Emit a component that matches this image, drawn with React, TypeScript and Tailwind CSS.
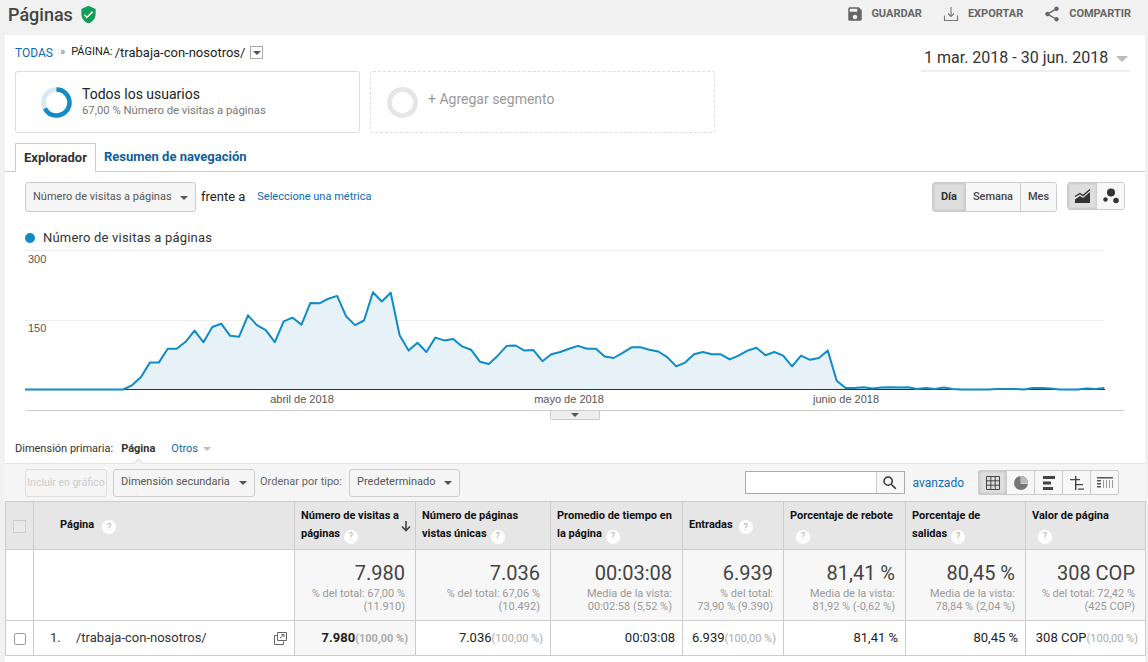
import type { ReactNode } from "react";
import { MdSave, MdShare, MdVerifiedUser, MdSearch } from "react-icons/md";

// daily pageviews, 1 mar - 30 jun
const visits = [
  0, 0, 0, 0, 0, 0, 0, 0, 0, 0, 0, 0, 9, 27, 58, 58, 88, 88, 103, 127, 102, 135, 142, 116, 114, 160, 139, 128, 102, 147,
  155, 140, 187, 186, 196, 202, 158, 139, 149, 210, 190, 209, 117, 84, 101, 81, 112, 106, 109, 93, 86, 60, 55, 73, 94,
  95, 84, 85, 61, 76, 81, 88, 94, 88, 88, 71, 68, 79, 91, 91, 86, 82, 70, 50, 58, 76, 81, 76, 76, 65, 73, 84, 90, 74,
  81, 73, 50, 73, 64, 68, 84, 19, 3, 3, 5, 2, 4, 5, 4, 5, 1, 3, 1, 4, 1, 0, 0, 0, 0, 1, 1, 1, 0, 3, 3, 2, 0, 0, 0, 2, 1, 3,
];

const BASE_Y = 139.5;
const linePoints = visits.map((v, i) => `${(i * 8.92).toFixed(1)},${(BASE_Y - (v * 139) / 300).toFixed(1)}`).join(" ");
const areaPoints = `0,${BASE_Y} ${linePoints} 1079,${BASE_Y}`;

function Caret({ className = "border-t-[#555]" }: { className?: string }) {
  return <span className={`inline-block w-0 h-0 border-x-[4px] border-x-transparent border-t-[4px] ${className}`} />;
}

function Help({ className = "" }: { className?: string }) {
  return (
    <span
      className={`inline-flex items-center justify-center w-[14px] h-[14px] rounded-full bg-white text-[9px] font-normal leading-none text-[#aaa] align-[-2px] ${className}`}
    >
      ?
    </span>
  );
}

function Donut({ color, pct, rest }: { color: string; pct: number; rest: string }) {
  const c = 2 * Math.PI * 13;
  return (
    <svg width="31" height="31" viewBox="0 0 31 31" className="shrink-0">
      <circle cx="15.5" cy="15.5" r="13" fill="none" stroke={rest} strokeWidth="4.5" />
      <circle
        cx="15.5"
        cy="15.5"
        r="13"
        fill="none"
        stroke={color}
        strokeWidth="4.5"
        strokeDasharray={`${(c * pct) / 100} ${c}`}
        transform="rotate(-90 15.5 15.5)"
      />
    </svg>
  );
}

function Select({ label, className }: { label: string; className: string }) {
  return (
    <div
      className={`flex items-center justify-between rounded-[3px] border border-[#ccc] bg-[#f5f5f5] text-[#555] ${className}`}
    >
      <span>{label}</span>
      <Caret />
    </div>
  );
}

function HeaderCell({ first, second, sorted }: { first: string; second?: string; sorted?: boolean }) {
  return (
    <th
      className={`relative border border-[#ccc] px-[6px] text-left align-middle text-[11px] font-bold leading-[18px] text-[#111] ${sorted ? "pr-[14px]" : ""}`}
    >
      <div>{first}</div>
      <div>
        {second && <span className="mr-[4px]">{second}</span>}
        <Help className={second ? "" : "ml-[6px]"} />
      </div>
      {sorted && (
        <svg width="12" height="12" viewBox="0 0 12 12" className="absolute right-[3px] top-[18px]">
          <path d="M6 1v9M2 6.5 6 10.5 10 6.5" fill="none" stroke="#444" strokeWidth="1.6" />
        </svg>
      )}
    </th>
  );
}

function TotalCell({ big, lines }: { big: string; lines: string[] }) {
  return (
    <td className="border border-[#ccc] bg-[#f7f7f7] pr-[10px] pt-[1px] text-right align-middle">
      <div className="text-[20px] leading-[28px] text-[#444]">{big}</div>
      {lines.map((l) => (
        <div key={l} className="text-[11px] leading-[13px] text-[#999]">
          {l}
        </div>
      ))}
    </td>
  );
}

function RowCell({ value, pct, strong }: { value: string; pct?: string; strong?: boolean }) {
  return (
    <td
      className={`whitespace-nowrap border border-[#ccc] pr-[7px] text-right align-middle text-[13px] text-[#222] ${strong ? "bg-[#f7f7f7] pr-[3px]" : pct ? "pr-[3px]" : ""}`}
    >
      <span className={strong ? "font-bold" : ""}>{value}</span>
      {pct && <span className={`text-[11px] text-[#aaa] ${strong ? "font-bold" : ""}`}>{pct}</span>}
    </td>
  );
}

function Chart() {
  return (
    <svg width="1100" height="160" viewBox="0 0 1100 160" className="ml-[20px] block font-['Liberation_Sans',sans-serif]">
      <line x1="0" x2="1080" y1="0.5" y2="0.5" stroke="#eee" />
      <line x1="0" x2="1080" y1="70.5" y2="70.5" stroke="#eee" />
      <polygon points={areaPoints} fill="#e6f2f8" />
      <line x1="0" x2="1080" y1="139.5" y2="139.5" stroke="#333" />
      <polyline points={linePoints} fill="none" stroke="#0f8bca" strokeWidth="2" strokeLinejoin="round" />
      <text x="3" y="13" fontSize="11" fill="#555">300</text>
      <text x="3" y="82" fontSize="11" fill="#555">150</text>
      <text x="277" y="153" fontSize="11" fill="#555" textAnchor="middle">abril de 2018</text>
      <text x="544" y="153" fontSize="11" fill="#555" textAnchor="middle">mayo de 2018</text>
      <text x="821" y="153" fontSize="11" fill="#555" textAnchor="middle">junio de 2018</text>
    </svg>
  );
}

export default function App() {
  return (
    <div className="h-[662px] w-[1148px] overflow-hidden bg-[#f1f1f1] font-['Roboto',sans-serif]">
      <div className="flex h-[35px] items-center justify-between pb-[7px] pl-[8px] pr-[17px]">
        <div className="flex items-center gap-[6px]">
          <span className="text-[18px] font-medium text-[#444]">Páginas</span>
          <MdVerifiedUser className="text-[#0f9d58]" size={19} />
        </div>
        <div className="flex items-center text-[11px] font-bold text-[#666]">
          <MdSave size={18} className="text-[#666]" />
          <span className="ml-[7px]">GUARDAR</span>
          <svg width="16" height="16" viewBox="0 0 16 16" className="ml-[21px]">
            <path d="M8 1v9M5 7.500 8 10.500 11 7.500M1.500 9.500v5h13v-5" fill="none" stroke="#777" strokeWidth="1.1" />
          </svg>
          <span className="ml-[9px]">EXPORTAR</span>
          <MdShare size={18} className="ml-[20px] text-[#666]" />
          <span className="ml-[8px]">COMPARTIR</span>
        </div>
      </div>

      <div className="ml-[5px] h-[627px] w-[1140px] bg-white">
        <div className="flex h-[36px] items-start justify-between pl-[10px] pr-[15px]">
          <div className="flex h-[36px] items-center pb-[1px] text-[#222]">
            <span className="text-[12px] text-[#0f6ab4]">TODAS</span>
            <span className="ml-[7px] mr-[6px] text-[11px] text-[#777]">»</span>
            <span className="text-[11px]">PÁGINA:</span>
            <span className="ml-[2px] text-[13px]">/trabaja-con-nosotros/</span>
            <span className="ml-[5px] flex h-[13px] w-[13px] items-center justify-center border border-[#aaa]">
              <Caret />
            </span>
          </div>
          <div className="flex h-[37px] w-[209px] items-end justify-between border-b-2 border-[#eee] pb-[2px] pl-[3px] pr-[2px]">
            <span className="text-[16px] leading-[20px] text-[#333]">1 mar. 2018 - 30 jun. 2018</span>
            <Caret className="mb-[6px] border-x-[6px] border-t-[6px] border-t-[#bbb]" />
          </div>
        </div>

        <div className="flex gap-[10px] pl-[10px]">
          <div className="flex h-[62px] w-[345px] items-center gap-[10px] rounded-[3px] border border-[#ddd] pl-[25px]">
            <Donut color="#0f8bca" pct={67} rest="#d5e8f3" />
            <div>
              <div className="text-[14px] leading-[17px] text-[#222]">Todos los usuarios</div>
              <div className="text-[11.3px] leading-[15px] text-[#777]">67,00 % Número de visitas a páginas</div>
            </div>
          </div>
          <div className="flex h-[62px] w-[345px] items-center gap-[10px] rounded-[3px] border border-dashed border-[#ddd] pl-[16px]">
            <Donut color="#e6e6e6" pct={100} rest="#e6e6e6" />
            <span className="pb-[5px] text-[14px] text-[#999]">+ Agregar segmento</span>
          </div>
        </div>

        <div className="mt-[10px] flex h-[29px] items-end gap-[8px] border-b border-[#ccc] pl-[10px]">
          <div className="-mb-px flex h-[29px] w-[81px] items-center justify-center border border-b-0 border-[#ccc] bg-white text-[13px] font-bold text-[#333]">
            Explorador
          </div>
          <div className="flex h-[28px] items-center text-[13px] font-bold text-[#0f5fa0]">Resumen de navegación</div>
        </div>

        <div className="mt-[10px] flex h-[30px] items-center justify-between pl-[20px] pr-[20px]">
          <div className="flex items-center">
            <Select label="Número de visitas a páginas" className="h-[30px] w-[171px] pl-[7px] pr-[7px] pt-[1px] text-[11px]" />
            <span className="ml-[5px] text-[13px] text-[#222]">frente a</span>
            <span className="ml-[12px] pt-[1px] text-[11px] text-[#0f6ab4]">Seleccione una métrica</span>
          </div>
          <div className="flex items-start gap-[10px]">
            <div className="flex h-[30px] w-[125px] overflow-hidden rounded-[3px] border border-[#ccc] text-[11px] font-medium text-[#444]">
              <div className="flex w-[33px] items-center justify-center border-r border-[#ccc] bg-[#dedede] pt-[1px] font-bold text-[#333] shadow-[inset_0_0_3px_rgba(0,0,0,0.2)]">
                Día
              </div>
              <div className="flex w-[55px] items-center justify-center border-r border-[#ccc] bg-[#f7f7f7] pt-[1px]">Semana</div>
              <div className="flex flex-1 items-center justify-center bg-[#f7f7f7] pt-[1px]">Mes</div>
            </div>
            <div className="flex h-[28px] w-[58px] overflow-hidden rounded-[3px] border border-[#ccc]">
              <div className="flex w-[29px] items-center justify-center bg-[#dedede] shadow-[inset_0_0_3px_rgba(0,0,0,0.2)]">
                <svg width="18" height="16" viewBox="0 0 18 16">
                  <path d="M1 8.500 6 5.500l3 2 7-6" fill="none" stroke="#333" strokeWidth="1.400" />
                  <path d="M1 15v-3.500L6 8l3 2 7-6v11z" fill="#333" />
                </svg>
              </div>
              <div className="flex flex-1 items-center justify-center bg-[#f7f7f7]">
                <svg width="18" height="16" viewBox="0 0 18 16">
                  <circle cx="9" cy="4.500" r="4" fill="#333" />
                  <circle cx="3.500" cy="11.500" r="2.200" fill="#333" />
                  <circle cx="14" cy="12.500" r="2.800" fill="#333" />
                </svg>
              </div>
            </div>
          </div>
        </div>

        <div className="flex h-[38px] items-center gap-[8px] pl-[20px] pt-[13px]">
          <span className="h-[10px] w-[10px] rounded-full bg-[#0f8bca]" />
          <span className="text-[13px] tracking-[0.2px] text-[#333]">Número de visitas a páginas</span>
        </div>

        <Chart />

        <div className="ml-[21px] w-[1098px] border-t border-[#ccc]">
          <div className="mx-auto flex h-[9px] w-[50px] items-center justify-center rounded-b-[2px] border border-t-0 border-[#ccc] bg-[#eee]">
            <Caret className="border-x-[3px] border-t-[3px] border-t-[#555]" />
          </div>
        </div>

        <div className="relative flex h-[43px] items-center pl-[10px] pt-[15px] text-[11px]">
          <span className="text-[#333]">Dimensión primaria:</span>
          <span className="ml-[8px] font-bold text-[#333]">Página</span>
          <span className="ml-[16px] text-[#0f6ab4]">Otros</span>
          <Caret className="ml-[5px] border-t-[#bbb]" />
          <span className="absolute bottom-[-4px] left-[130px] h-[7px] w-[7px] rotate-45 border-l border-t border-[#ddd] bg-[#f5f5f5]" />
        </div>

        <div className="flex h-[38px] items-center border-t border-[#e5e5e5] bg-[#f5f5f5] pl-[20px] pr-[26px]">
          <div className="flex h-[28px] w-[82px] items-center justify-center overflow-hidden whitespace-nowrap rounded-[3px] border border-[#ddd] text-[10.500px] text-[#ccc]">
            Incluir en gráfico
          </div>
          <Select label="Dimensión secundaria" className="ml-[6px] h-[28px] w-[142px] pl-[7px] pr-[7px] text-[11px]" />
          <span className="ml-[5px] text-[11px] text-[#666]">Ordenar por tipo:</span>
          <Select label="Predeterminado" className="ml-[7px] h-[28px] w-[111px] pl-[7px] pr-[7px] text-[11px]" />
          <div className="ml-auto flex h-[23px] w-[160px] border border-[#aaa] bg-white">
            <div className="flex-1" />
            <div className="flex w-[28px] items-center justify-center border-l border-[#ccc] bg-[#f7f7f7]">
              <MdSearch size={18} className="text-[#333]" />
            </div>
          </div>
          <span className="ml-[8px] text-[12px] text-[#0f6ab4]">avanzado</span>
          <div className="ml-[14px] flex h-[25px] w-[141px] rounded-[2px] border border-[#ccc] bg-[#f7f7f7]">
            <div className="flex w-[28px] items-center justify-center border-r border-[#ccc] bg-[#dedede] shadow-[inset_0_0_3px_rgba(0,0,0,0.2)]">
              <svg width="14" height="14" viewBox="0 0 14 14">
                <path d="M.5.500h13v13H.5zM.5 4.800h13M.5 9.200h13M4.800.5v13M9.200.5v13" fill="none" stroke="#444" />
              </svg>
            </div>
            <div className="flex w-[28px] items-center justify-center border-r border-[#ccc]">
              <svg width="14" height="14" viewBox="0 0 14 14">
                <circle cx="7" cy="7" r="7" fill="#777" />
                <path d="M7.500 0v7H14A7 7 0 0 0 7.500 0z" fill="#bbb" />
                <path d="M7 0v7.500h7" fill="none" stroke="#f7f7f7" strokeWidth=".7" />
              </svg>
            </div>
            <div className="flex w-[28px] items-center justify-center border-r border-[#ccc]">
              <svg width="14" height="14" viewBox="0 0 14 14">
                <path d="M1 0h12v3H1zM1 5.500h8v3H1zM1 11h10v3H1z" fill="#444" />
              </svg>
            </div>
            <div className="flex w-[28px] items-center justify-center border-r border-[#ccc]">
              <svg width="14" height="14" viewBox="0 0 14 14">
                <path d="M0 3h10v1.200H0zM5 0h1.400v14H5zM5 8h8v1.200H5zM8 12.500h6v1.200H8z" fill="#444" />
              </svg>
            </div>
            <div className="flex flex-1 items-center justify-center">
              <svg width="16" height="14" viewBox="0 0 16 14">
                <path d="M0 1h16v1.500H0zM0 4h4v1.500H0zM0 7h4v1.500H0zM0 10h4v1.500H0z" fill="#555" />
                <path d="M6 4h1v8H6zM9 4h1v8H9zM12 4h1v8h-1zM15 4h1v8h-1z" fill="#999" />
              </svg>
            </div>
          </div>
        </div>

        <table className="w-[1140px] table-fixed border-collapse">
          <colgroup>
            <col className="w-[28px]" />
            <col className="w-[261px]" />
            <col className="w-[121px]" />
            <col className="w-[135px]" />
            <col className="w-[132px]" />
            <col className="w-[101px]" />
            <col className="w-[122px]" />
            <col className="w-[120px]" />
            <col className="w-[120px]" />
          </colgroup>
          <thead>
            <tr className="h-[48px] bg-[#e6e6e6]">
              <th className="border border-[#ccc] text-center align-middle">
                <span className="inline-block h-[13px] w-[13px] border border-[#ccc] bg-[#e9e9e9] align-middle" />
              </th>
              <th className="border border-[#ccc] pl-[26px] text-left align-middle text-[11px] font-bold text-[#111]">
                <span className="mr-[8px]">Página</span>
                <Help />
              </th>
              <HeaderCell sorted first="Número de visitas a" second="páginas" />
              <HeaderCell first="Número de páginas" second="vistas únicas" />
              <HeaderCell first="Promedio de tiempo en" second="la página" />
              <th className="border border-[#ccc] px-[6px] text-left align-middle text-[11px] font-bold text-[#111]">
                <span className="mr-[6px]">Entradas</span>
                <Help />
              </th>
              <HeaderCell first="Porcentaje de rebote" />
              <HeaderCell first="Porcentaje de" second="salidas" />
              <HeaderCell first="Valor de página" />
            </tr>
          </thead>
          <tbody>
            <tr className="h-[71px]">
              <td className="border border-[#ccc]" />
              <td className="border border-[#ccc]" />
              <TotalCell big="7.980" lines={["% del total: 67,00 %", "(11.910)"]} />
              <TotalCell big="7.036" lines={["% del total: 67,06 %", "(10.492)"]} />
              <TotalCell big="00:03:08" lines={["Media de la vista:", "00:02:58 (5,52 %)"]} />
              <TotalCell big="6.939" lines={["% del total:", "73,90 % (9.390)"]} />
              <TotalCell big="81,41 %" lines={["Media de la vista:", "81,92 % (-0,62 %)"]} />
              <TotalCell big="80,45 %" lines={["Media de la vista:", "78,84 % (2,04 %)"]} />
              <TotalCell big="308 COP" lines={["% del total: 72,42 %", "(425 COP)"]} />
            </tr>
            <tr className="h-[35px]">
              <td className="border border-[#ccc] text-center align-middle">
                <span className="inline-block h-[12px] w-[12px] rounded-[2px] border border-[#999] bg-white align-middle" />
              </td>
              <td className="border border-[#ccc] align-middle text-[13px] text-[#333]">
                <div className="flex items-center pl-[16px] pr-[7px]">
                  <span className="w-[26px]">1.</span>
                  <span>/trabaja-con-nosotros/</span>
                  <svg width="13" height="13" viewBox="0 0 13 13" className="ml-auto">
                    <path d="M3.500 3.500H.5v9h9v-3M3.500.5h9v8h-9zM6 6l4-3.500M7.500 2.500H10V5" fill="none" stroke="#666" />
                  </svg>
                </div>
              </td>
              <RowCell value="7.980" pct="(100,00 %)" strong />
              <RowCell value="7.036" pct="(100,00 %)" />
              <RowCell value="00:03:08" />
              <RowCell value="6.939" pct="(100,00 %)" />
              <RowCell value="81,41 %" />
              <RowCell value="80,45 %" />
              <RowCell value="308 COP" pct="(100,00 %)" />
            </tr>
          </tbody>
        </table>
      </div>
    </div>
  );
}
